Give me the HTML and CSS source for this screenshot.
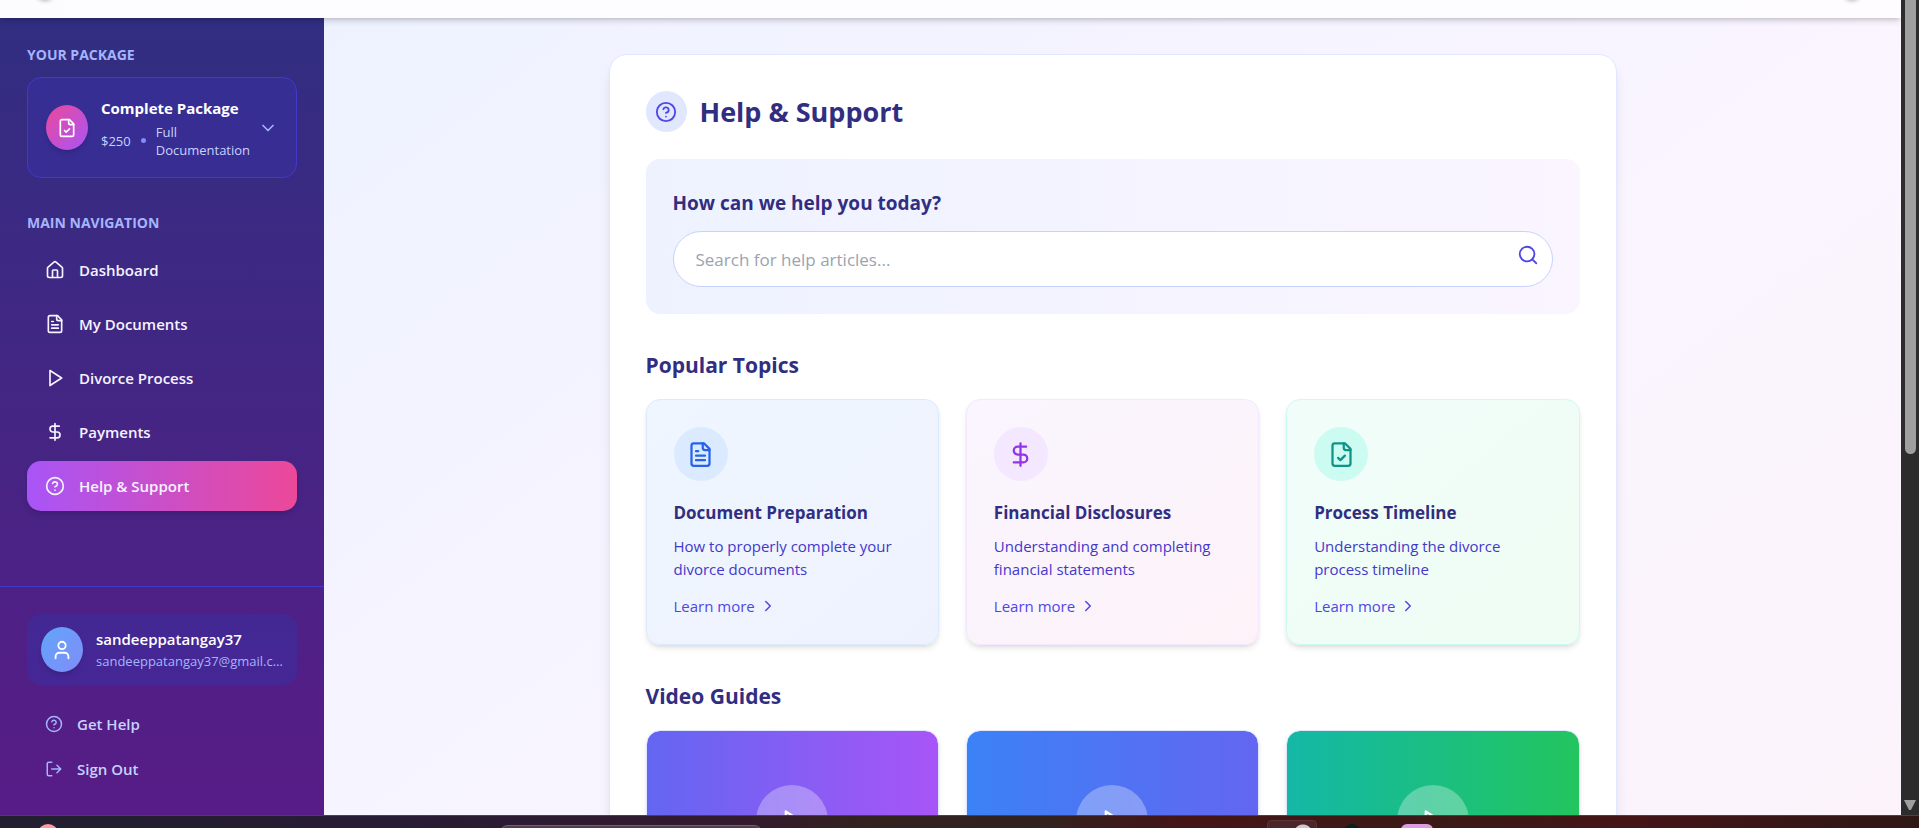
FILE: index.html
```html
<!DOCTYPE html>
<html lang="en">
<head>
    <meta charset="UTF-8">
    <meta name="viewport" content="width=device-width, initial-scale=1.0">
    <title>Help &amp; Support</title>
    <link rel="stylesheet" href="styles.css">
</head>
<body>
    <!-- Shared icons -->
    <svg class="icon-defs" aria-hidden="true">
        <symbol id="i-home" viewBox="0 0 24 24"><path d="M15 21v-8a1 1 0 0 0-1-1h-4a1 1 0 0 0-1 1v8"/><path d="M3 10a2 2 0 0 1 .709-1.528l7-5.999a2 2 0 0 1 2.582 0l7 5.999A2 2 0 0 1 21 10v9a2 2 0 0 1-2 2H5a2 2 0 0 1-2-2z"/></symbol>
        <symbol id="i-file-text" viewBox="0 0 24 24"><path d="M15 2H6a2 2 0 0 0-2 2v16a2 2 0 0 0 2 2h12a2 2 0 0 0 2-2V7Z"/><path d="M14 2v4a2 2 0 0 0 2 2h4M10 9H8M16 13H8M16 17H8"/></symbol>
        <symbol id="i-file-check" viewBox="0 0 24 24"><path d="M15 2H6a2 2 0 0 0-2 2v16a2 2 0 0 0 2 2h12a2 2 0 0 0 2-2V7Z"/><path d="M14 2v4a2 2 0 0 0 2 2h4M9 15l2 2 4-4"/></symbol>
        <symbol id="i-play" viewBox="0 0 24 24"><path d="M6 3l14 9-14 9z"/></symbol>
        <symbol id="i-dollar" viewBox="0 0 24 24"><path d="M12 2v20M17 5H9.5a3.5 3.5 0 0 0 0 7h5a3.5 3.5 0 0 1 0 7H6"/></symbol>
        <symbol id="i-help" viewBox="0 0 24 24"><circle cx="12" cy="12" r="10"/><path d="M9.09 9a3 3 0 0 1 5.83 1c0 2-3 3-3 3M12 17h.01"/></symbol>
        <symbol id="i-user" viewBox="0 0 24 24"><path d="M19 21v-2a4 4 0 0 0-4-4H9a4 4 0 0 0-4 4v2"/><circle cx="12" cy="7" r="4"/></symbol>
        <symbol id="i-logout" viewBox="0 0 24 24"><path d="M9 21H5a2 2 0 0 1-2-2V5a2 2 0 0 1 2-2h4M16 17l5-5-5-5M21 12H9"/></symbol>
        <symbol id="i-search" viewBox="0 0 24 24"><circle cx="11" cy="11" r="8"/><path d="M21 21l-4.3-4.3"/></symbol>
        <symbol id="i-down" viewBox="0 0 24 24"><path d="M6 9l6 6 6-6"/></symbol>
        <symbol id="i-right" viewBox="0 0 24 24"><path d="M9 18l6-6-6-6"/></symbol>
    </svg>

    <div class="window">
        <div class="app">
            <header class="topbar">
                <span class="topbar-dot"></span>
                <span class="topbar-dot"></span>
            </header>

            <div class="layout">
                <aside class="sidebar">
                    <div class="sidebar-top">
                        <h2 class="sidebar-label">YOUR PACKAGE</h2>
                        <button class="package" type="button">
                            <span class="package-icon"><svg class="icon icon-20"><use href="#i-file-check"/></svg></span>
                            <span class="package-info">
                                <span class="package-name">Complete Package</span>
                                <span class="package-meta">
                                    <span>$250</span>
                                    <span class="dot"></span>
                                    <span>Full Documentation</span>
                                </span>
                            </span>
                            <svg class="icon icon-20 package-arrow"><use href="#i-down"/></svg>
                        </button>

                        <h2 class="sidebar-label">MAIN NAVIGATION</h2>
                        <nav class="nav">
                            <a href="#" class="nav-item"><svg class="icon icon-20"><use href="#i-home"/></svg>Dashboard</a>
                            <a href="#" class="nav-item"><svg class="icon icon-20"><use href="#i-file-text"/></svg>My Documents</a>
                            <a href="#" class="nav-item"><svg class="icon icon-20"><use href="#i-play"/></svg>Divorce Process</a>
                            <a href="#" class="nav-item"><svg class="icon icon-20"><use href="#i-dollar"/></svg>Payments</a>
                            <a href="#" class="nav-item active"><svg class="icon icon-20"><use href="#i-help"/></svg>Help &amp; Support</a>
                        </nav>
                    </div>

                    <div class="sidebar-bottom">
                        <div class="user">
                            <span class="avatar"><svg class="icon icon-22"><use href="#i-user"/></svg></span>
                            <div class="user-info">
                                <div class="user-name">sandeeppatangay37</div>
                                <div class="user-email">sandeeppatangay37@gmail.com</div>
                            </div>
                        </div>
                        <a href="#" class="foot-link"><svg class="icon icon-18"><use href="#i-help"/></svg>Get Help</a>
                        <a href="#" class="foot-link"><svg class="icon icon-18"><use href="#i-logout"/></svg>Sign Out</a>
                    </div>
                </aside>

                <main class="main">
                    <div class="panel">
                        <div class="panel-header">
                            <span class="panel-icon"><svg class="icon icon-22"><use href="#i-help"/></svg></span>
                            <h1>Help &amp; Support</h1>
                        </div>

                        <form class="search">
                            <label for="help-search">How can we help you today?</label>
                            <div class="search-box">
                                <input type="text" id="help-search" placeholder="Search for help articles...">
                                <button type="button" class="search-button" aria-label="Search"><svg class="icon icon-22"><use href="#i-search"/></svg></button>
                            </div>
                        </form>

                        <section>
                            <h2 class="section-title">Popular Topics</h2>
                            <div class="cards">
                                <article class="topic blue">
                                    <span class="topic-icon"><svg class="icon icon-27"><use href="#i-file-text"/></svg></span>
                                    <h3>Document Preparation</h3>
                                    <p>How to properly complete your divorce documents</p>
                                    <a href="#">Learn more <svg class="icon icon-18"><use href="#i-right"/></svg></a>
                                </article>
                                <article class="topic purple">
                                    <span class="topic-icon"><svg class="icon icon-27"><use href="#i-dollar"/></svg></span>
                                    <h3>Financial Disclosures</h3>
                                    <p>Understanding and completing financial statements</p>
                                    <a href="#">Learn more <svg class="icon icon-18"><use href="#i-right"/></svg></a>
                                </article>
                                <article class="topic teal">
                                    <span class="topic-icon"><svg class="icon icon-27"><use href="#i-file-check"/></svg></span>
                                    <h3>Process Timeline</h3>
                                    <p>Understanding the divorce process timeline</p>
                                    <a href="#">Learn more <svg class="icon icon-18"><use href="#i-right"/></svg></a>
                                </article>
                            </div>
                        </section>

                        <section>
                            <h2 class="section-title">Video Guides</h2>
                            <div class="cards">
                                <div class="video indigo"><button type="button" class="play" aria-label="Play"><svg class="icon icon-27"><use href="#i-play"/></svg></button></div>
                                <div class="video azure"><button type="button" class="play" aria-label="Play"><svg class="icon icon-27"><use href="#i-play"/></svg></button></div>
                                <div class="video green"><button type="button" class="play" aria-label="Play"><svg class="icon icon-27"><use href="#i-play"/></svg></button></div>
                            </div>
                        </section>
                    </div>
                </main>
            </div>
        </div>

        <div class="scrollbar">
            <div class="scrollbar-thumb"></div>
            <div class="scrollbar-arrow"></div>
        </div>
    </div>

    <!-- Desktop taskbar -->
    <div class="taskbar">
        <span class="task task-weather"></span>
        <span class="task task-search"></span>
        <span class="task task-window"></span>
        <span class="task task-app"></span>
        <span class="task task-media"></span>
    </div>
</body>
</html>
```
FILE: styles.css
```css
:root {
    --indigo-50: #eef2ff;
    --indigo-100: #e0e7ff;
    --indigo-200: #c7d2fe;
    --indigo-300: #a5b4fc;
    --indigo-600: #4f46e5;
    --indigo-700: #4338ca;
    --indigo-900: #312e81;
    --shadow: 0 4px 6px -1px rgba(0, 0, 0, 0.1), 0 2px 4px -2px rgba(0, 0, 0, 0.1);
}

* {
    box-sizing: border-box;
    margin: 0;
    padding: 0;
}

body {
    height: 100vh;
    display: flex;
    flex-direction: column;
    overflow: hidden;
    font-family: 'Segoe UI', 'Open Sans', 'Noto Sans', sans-serif;
    font-size: 15px;
}

a {
    text-decoration: none;
}

button,
input {
    font: inherit;
    border: none;
    background: none;
}

button {
    cursor: pointer;
}

/* Icons */
.icon-defs {
    position: absolute;
    width: 0;
    height: 0;
}

.icon {
    flex-shrink: 0;
    fill: none;
    stroke: currentColor;
    stroke-width: 2;
    stroke-linecap: round;
    stroke-linejoin: round;
}

.icon-18 { width: 18px; height: 18px; }
.icon-20 { width: 20px; height: 20px; }
.icon-22 { width: 22px; height: 22px; }
.icon-27 { width: 27px; height: 27px; }

/* Window */
.window {
    flex: 1;
    min-height: 0;
    display: flex;
}

.app {
    flex: 1;
    min-width: 0;
    display: flex;
    flex-direction: column;
}

.topbar {
    position: relative;
    z-index: 1;
    flex: 0 0 18px;
    padding: 0 40px 0 36px;
    display: flex;
    justify-content: space-between;
    background: linear-gradient(to right, #fcfcff, #fefcff);
    box-shadow: 0 4px 6px -1px rgba(0, 0, 0, 0.15), 0 2px 4px -2px rgba(0, 0, 0, 0.15);
    clip-path: inset(0 0 -12px 0);
}

.topbar-dot {
    width: 18px;
    height: 18px;
    margin-top: -18px;
    border-radius: 50%;
    box-shadow: 0 1px 4px rgba(0, 0, 0, 0.3);
}

.layout {
    flex: 1;
    min-height: 0;
    display: flex;
}

/* Sidebar */
.sidebar {
    flex: 0 0 324px;
    min-width: 0;
    display: flex;
    flex-direction: column;
    justify-content: space-between;
    background: linear-gradient(to bottom, #312e81, #581c87);
    color: white;
}

.sidebar-top {
    padding: 27px;
}

.sidebar-label {
    font-size: 14px;
    line-height: 20px;
    font-weight: 700;
    color: var(--indigo-300);
    margin-bottom: 12px;
}

.package {
    width: 100%;
    min-height: 101px;
    display: flex;
    align-items: center;
    gap: 13px;
    padding: 12px 18px;
    margin-bottom: 35px;
    border: 1px solid var(--indigo-700);
    border-radius: 14px;
    background: rgba(55, 48, 163, 0.5);
    color: white;
    text-align: left;
}

.package-icon,
.avatar {
    flex: 0 0 42px;
    height: 45px;
    display: flex;
    align-items: center;
    justify-content: center;
    border-radius: 50%;
    box-shadow: var(--shadow);
}

.package-icon {
    background: linear-gradient(to bottom right, #ec4899, #a855f7);
}

.package-info {
    flex: 1;
    min-width: 0;
    display: flex;
    flex-direction: column;
    gap: 4px;
}

.package-name {
    font-weight: 700;
    line-height: 22px;
    white-space: nowrap;
}

.package-meta {
    display: flex;
    align-items: center;
    gap: 10px;
    font-size: 13px;
    line-height: 18px;
    color: var(--indigo-200);
}

.dot {
    flex: 0 0 5px;
    height: 5px;
    border-radius: 50%;
    background: #818cf8;
}

.package-arrow {
    color: var(--indigo-300);
}

.nav {
    display: flex;
    flex-direction: column;
    gap: 4px;
}

.nav-item {
    height: 50px;
    display: flex;
    align-items: center;
    gap: 14px;
    padding: 0 18px;
    border-radius: 14px;
    color: #f5f3ff;
    font-weight: 600;
}

.nav-item.active {
    background: linear-gradient(to right, #a855f7, #ec4899);
    box-shadow: var(--shadow);
}

.sidebar-bottom {
    padding: 27px 27px 24px;
    border-top: 1px solid var(--indigo-700);
}

.user {
    display: flex;
    align-items: center;
    gap: 13px;
    padding: 13px 14px;
    margin-bottom: 16px;
    border-radius: 14px;
    background: rgba(55, 48, 163, 0.5);
}

.avatar {
    background: linear-gradient(to bottom right, #60a5fa, #818cf8);
}

.user-info {
    min-width: 0;
}

.user-name {
    font-weight: 600;
    line-height: 22px;
}

.user-email {
    overflow: hidden;
    text-overflow: ellipsis;
    white-space: nowrap;
    font-size: 13px;
    line-height: 22px;
    color: var(--indigo-300);
}

.foot-link {
    height: 45px;
    display: flex;
    align-items: center;
    gap: 14px;
    padding: 0 18px;
    color: var(--indigo-200);
    font-weight: 600;
}

.foot-link .icon {
    color: var(--indigo-300);
}

/* Main content */
.main {
    flex: 1;
    min-width: 0;
    padding: 36px;
    overflow: hidden;
    background: linear-gradient(to bottom right, var(--indigo-50), #faf5ff, #fdf2f8);
    background-size: 100% 150%;
}

.panel {
    max-width: 1008px;
    margin: 0 auto;
    padding: 36px;
    border: 1px solid var(--indigo-100);
    border-radius: 18px;
    background: white;
    box-shadow: 0 10px 15px -3px rgba(0, 0, 0, 0.1), 0 4px 6px -4px rgba(0, 0, 0, 0.1);
}

.panel-header {
    display: flex;
    align-items: center;
    gap: 13px;
    margin-bottom: 27px;
    color: var(--indigo-900);
}

.panel-header h1 {
    font-size: 27px;
    line-height: 36px;
}

.panel-icon {
    width: 41px;
    height: 41px;
    display: flex;
    align-items: center;
    justify-content: center;
    border-radius: 50%;
    background: var(--indigo-100);
    color: var(--indigo-600);
}

.search {
    padding: 27px;
    margin-bottom: 36px;
    border-radius: 14px;
    background: linear-gradient(to right, var(--indigo-50), #faf5ff);
}

.search label {
    display: block;
    margin-bottom: 10px;
    font-size: 19px;
    line-height: 35px;
    font-weight: 700;
    color: var(--indigo-900);
}

.search-box {
    position: relative;
}

.search-box input {
    width: 100%;
    height: 56px;
    padding: 0 58px 0 22px;
    border: 1px solid var(--indigo-200);
    border-radius: 28px;
    background: white;
    font-size: 17px;
    outline: none;
}

.search-box input::placeholder {
    color: #9ca3af;
}

.search-button {
    position: absolute;
    top: 13px;
    right: 14px;
    height: 22px;
    color: var(--indigo-600);
}

.section-title {
    margin-bottom: 18px;
    font-size: 21px;
    line-height: 31px;
    font-weight: 700;
    color: var(--indigo-900);
}

.cards {
    display: grid;
    grid-template-columns: repeat(3, 1fr);
    gap: 27px;
    margin-bottom: 36px;
}

.topic {
    padding: 27px;
    border: 1px solid;
    border-radius: 14px;
    box-shadow: var(--shadow);
}

.topic-icon {
    width: 54px;
    height: 54px;
    display: flex;
    align-items: center;
    justify-content: center;
    margin-bottom: 18px;
    border-radius: 50%;
}

.topic h3 {
    margin-bottom: 9px;
    font-size: 17px;
    line-height: 27px;
    font-weight: 700;
    color: var(--indigo-900);
}

.topic p {
    margin-bottom: 14px;
    line-height: 23px;
    color: var(--indigo-700);
}

.topic a {
    display: flex;
    align-items: center;
    gap: 4px;
    line-height: 22px;
    font-weight: 500;
    color: var(--indigo-600);
}

.blue {
    background: linear-gradient(to bottom right, #eff6ff, #eef2ff);
    border-color: #dbeafe;
}

.blue .topic-icon {
    background: #dbeafe;
    color: #2563eb;
}

.purple {
    background: linear-gradient(to bottom right, #faf5ff, #fdf2f8);
    border-color: #f3e8ff;
}

.purple .topic-icon {
    background: #f3e8ff;
    color: #9333ea;
}

.teal {
    background: linear-gradient(to bottom right, #f0fdfa, #f0fdf4);
    border-color: #ccfbf1;
}

.teal .topic-icon {
    background: #ccfbf1;
    color: #0d9488;
}

.video {
    height: 182px;
    display: flex;
    align-items: center;
    justify-content: center;
    border: 1px solid var(--indigo-100);
    border-radius: 14px;
    box-shadow: var(--shadow);
}

.indigo { background: linear-gradient(to right, #6366f1, #a855f7) padding-box; }
.azure { background: linear-gradient(to right, #3b82f6, #6366f1) padding-box; }
.green { background: linear-gradient(to right, #14b8a6, #22c55e) padding-box; }

.play {
    width: 72px;
    height: 72px;
    display: flex;
    align-items: center;
    justify-content: center;
    border-radius: 50%;
    background: rgba(255, 255, 255, 0.3);
    color: white;
}

/* Scrollbar */
.scrollbar {
    flex: 0 0 18px;
    display: flex;
    flex-direction: column;
    justify-content: space-between;
    align-items: center;
    padding-bottom: 5px;
    background: #2c2c2c;
}

.scrollbar-thumb {
    width: 11px;
    height: 56%;
    border-radius: 0 0 6px 6px;
    background: #9f9f9f;
}

.scrollbar-arrow {
    width: 12px;
    height: 10px;
    background: #9f9f9f;
    clip-path: polygon(0 0, 100% 0, 58% 100%, 42% 100%);
}

/* Taskbar */
.taskbar {
    position: relative;
    flex: 0 0 13px;
    overflow: hidden;
    border-top: 1px solid #4a4246;
    background: linear-gradient(to right, #231f30, #281c35 20%, #331a2e 38%, #33231f 46%, #32221f 54%, #451417 62%, #3b1a16 75%, #451417 85%, #2e1816);
}

.task {
    position: absolute;
    top: 8px;
    height: 18px;
}

.task-weather {
    left: 2%;
    width: 20px;
    border-radius: 50%;
    background: #ff9aa2;
}

.task-search {
    left: 26%;
    width: 264px;
    top: 9px;
    border: 1px solid #75606f;
    border-radius: 9px;
    background: #513c4e;
}

.task-window {
    left: 66%;
    width: 50px;
    top: 4px;
    border: 1px solid #5b3436;
    border-radius: 4px;
    background: radial-gradient(circle at 35px 13px, #d5c5d3 9px, #4b2529 10px);
}

.task-app {
    left: 70%;
    width: 18px;
    border-radius: 50%;
    background: #0b1f20;
}

.task-media {
    left: 73%;
    width: 32px;
    border-radius: 6px;
    background: #de9be4;
}
```
